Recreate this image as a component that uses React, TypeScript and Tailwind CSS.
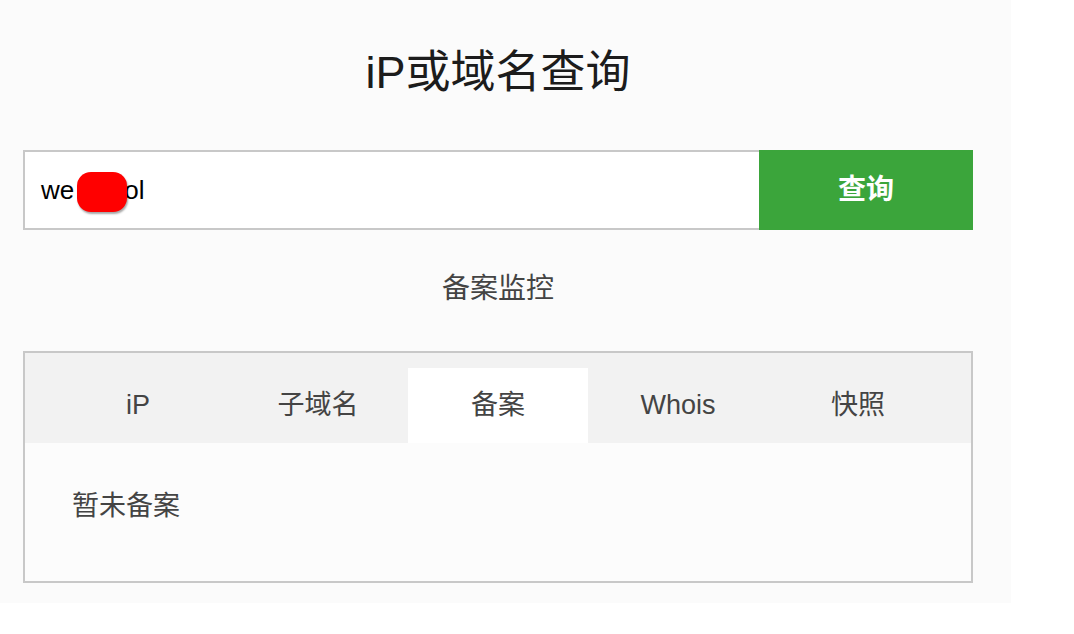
const font = { fontFamily: '"Liberation Sans", "Noto Sans CJK SC", sans-serif' };

const tabs = ["iP", "子域名", "备案", "Whois", "快照"];

export default function App() {
  return (
    <div className="w-[1074px] h-[634px] bg-white" style={font}>
      <div className="w-[1011px] h-[603px] bg-[#fbfbfb] pl-[23px]">
        <div className="w-[950px]">
          {/* Title */}
          <h1 className="pt-[50px] h-[150px] text-center text-[45px] leading-[45px] text-[#1c1c1c]">iP或域名查询</h1>

          {/* Search */}
          <div className="flex w-[950px] h-[80px]">
            <div className="flex-1 flex items-center border-2 border-r-0 border-[#c8c8c8] bg-white pl-[16px] text-[26px] text-black">
              <span>we</span>
              <span className="relative inline-block w-[50px] h-[26px]">
                <span className="absolute left-[3px] top-[-5px] w-[50px] h-[40px] rounded-[14px] bg-[#ff0000] shadow-[1px_2px_2px_rgba(0,0,0,0.35)]" />
              </span>
              <span>ol</span>
            </div>
            <button className="w-[214px] h-full bg-[#3ba53b] text-white text-[28px] font-semibold">查询</button>
          </div>

          <p className="mt-[45px] h-[28px] leading-[28px] text-center text-[28px] text-[#444]">备案监控</p>

          {/* Panel */}
          <div className="mt-[48px] w-[950px] h-[232px] border-2 border-[#c8c8c8] bg-[#fcfcfc]">
            <ul className="flex h-[90px] pt-[15px] pl-[23px] bg-[#f2f2f2]">
              {tabs.map((t) => (
                <li
                  key={t}
                  className={`w-[180px] h-[75px] flex items-center justify-center text-[27px] text-[#444] ${t === "备案" ? "bg-white" : ""}`}
                >
                  {t}
                </li>
              ))}
            </ul>
            <div className="pt-[49px] pl-[47px] text-[27px] leading-[28px] text-[#444]">暂未备案</div>
          </div>
        </div>
      </div>
    </div>
  );
}
